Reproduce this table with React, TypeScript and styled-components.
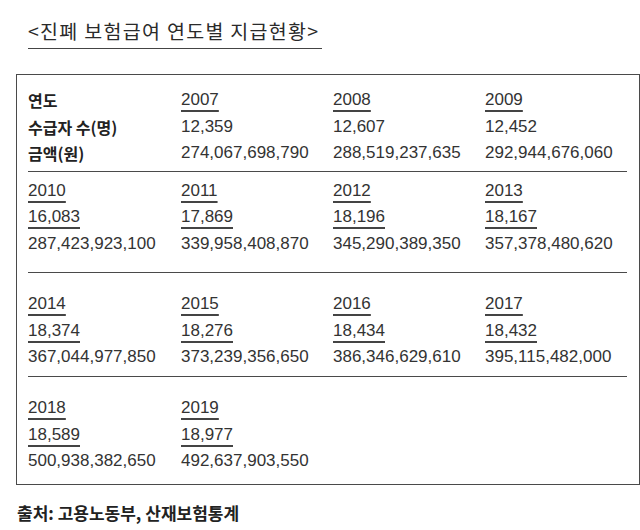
import React from "react";
import styled, { createGlobalStyle } from "styled-components";

const GlobalStyle = createGlobalStyle`
  html, body {
    margin: 0;
    padding: 0;
    background: #ffffff;
  }
  body {
    width: 640px;
    height: 530px;
    overflow: hidden;
    font-family: "Liberation Sans", "Noto Sans CJK KR", sans-serif;
    color: #333;
  }
`;

const Page = styled.div`
  display: flex;
  flex-direction: column;
  padding-top: 18px;
`;

const TitleWrap = styled.div`
  display: flex;
  padding-left: 28px;
`;

const Title = styled.h1`
  margin: 0;
  width: 294px;
  font-family: "Noto Sans CJK KR", sans-serif;
  font-weight: 400;
  font-size: 19.5px;
  letter-spacing: 1.3px;
  line-height: 26px;
  color: #2a2a2a;
  padding-bottom: 3.5px;
  border-bottom: 1.5px solid #444;
  white-space: nowrap;
`;

const Box = styled.div`
  position: relative;
  margin: 25px 0 0 16px;
  width: 611px;
  border: 1.5px solid #4a4a4a;
  padding: 12.5px 0 9px 11px;
  display: flex;
  flex-direction: column;
`;

const Tick = styled.div`
  position: absolute;
  top: 71px;
  right: -12px;
  width: 11px;
  height: 1.5px;
  background: #555;
`;

const Section = styled.div<{ $pt: number; $pb: number; $divider: boolean }>`
  display: grid;
  grid-template-columns: 153px 152px 152px 1fr;
  margin-right: 12px;
  padding-top: ${(p) => p.$pt}px;
  padding-bottom: ${(p) => p.$pb}px;
  border-bottom: ${(p) => (p.$divider ? "1.5px solid #4a4a4a" : "none")};
`;

const Column = styled.div`
  display: flex;
  flex-direction: column;
  align-items: flex-start;
`;

const Label = styled.div`
  font-family: "Noto Sans CJK KR", sans-serif;
  font-weight: 700;
  font-size: 16px;
  line-height: 26.5px;
  height: 26.5px;
  color: #222;
  white-space: nowrap;
`;

const Value = styled.div<{ $underline?: boolean }>`
  font-family: "Liberation Sans", Arial, sans-serif;
  font-size: 17px;
  line-height: 26.5px;
  height: 26.5px;
  color: #333;
  white-space: nowrap;
  text-decoration: ${(p) => (p.$underline ? "underline" : "none")};
  text-decoration-color: #444;
  text-decoration-thickness: 1.5px;
  text-underline-offset: 5px;
`;

const Footer = styled.div`
  margin: 16px 0 0 17px;
  font-family: "Noto Sans CJK KR", sans-serif;
  font-weight: 700;
  font-size: 17px;
  line-height: 24px;
  color: #222;
`;

type Entry = { year: string; count: string; amount: string };

const first: Entry[] = [
  { year: "2007", count: "12,359", amount: "274,067,698,790" },
  { year: "2008", count: "12,607", amount: "288,519,237,635" },
  { year: "2009", count: "12,452", amount: "292,944,676,060" },
];

const rows: { pt: number; pb: number; divider: boolean; items: Entry[] }[] = [
  {
    pt: 5.5,
    pb: 15,
    divider: true,
    items: [
      { year: "2010", count: "16,083", amount: "287,423,923,100" },
      { year: "2011", count: "17,869", amount: "339,958,408,870" },
      { year: "2012", count: "18,196", amount: "345,290,389,350" },
      { year: "2013", count: "18,167", amount: "357,378,480,620" },
    ],
  },
  {
    pt: 18,
    pb: 5.5,
    divider: true,
    items: [
      { year: "2014", count: "18,374", amount: "367,044,977,850" },
      { year: "2015", count: "18,276", amount: "373,239,356,650" },
      { year: "2016", count: "18,434", amount: "386,346,629,610" },
      { year: "2017", count: "18,432", amount: "395,115,482,000" },
    ],
  },
  {
    pt: 18,
    pb: 0,
    divider: false,
    items: [
      { year: "2018", count: "18,589", amount: "500,938,382,650" },
      { year: "2019", count: "18,977", amount: "492,637,903,550" },
    ],
  },
];

export default function App() {
  return (
    <>
      <GlobalStyle />
      <Page>
        <TitleWrap>
          <Title>&lt;진폐 보험급여 연도별 지급현황&gt;</Title>
        </TitleWrap>
        <Box>
          <Tick />
          <Section $pt={0} $pb={4.5} $divider>
            <Column>
              <Label>연도</Label>
              <Label>수급자 수(명)</Label>
              <Label>금액(원)</Label>
            </Column>
            {first.map((e) => (
              <Column key={e.year}>
                <Value $underline>{e.year}</Value>
                <Value>{e.count}</Value>
                <Value>{e.amount}</Value>
              </Column>
            ))}
          </Section>
          {rows.map((r, i) => (
            <Section key={i} $pt={r.pt} $pb={r.pb} $divider={r.divider}>
              {r.items.map((e) => (
                <Column key={e.year}>
                  <Value $underline>{e.year}</Value>
                  <Value $underline>{e.count}</Value>
                  <Value>{e.amount}</Value>
                </Column>
              ))}
            </Section>
          ))}
        </Box>
        <Footer>출처: 고용노동부, 산재보험통계</Footer>
      </Page>
    </>
  );
}
